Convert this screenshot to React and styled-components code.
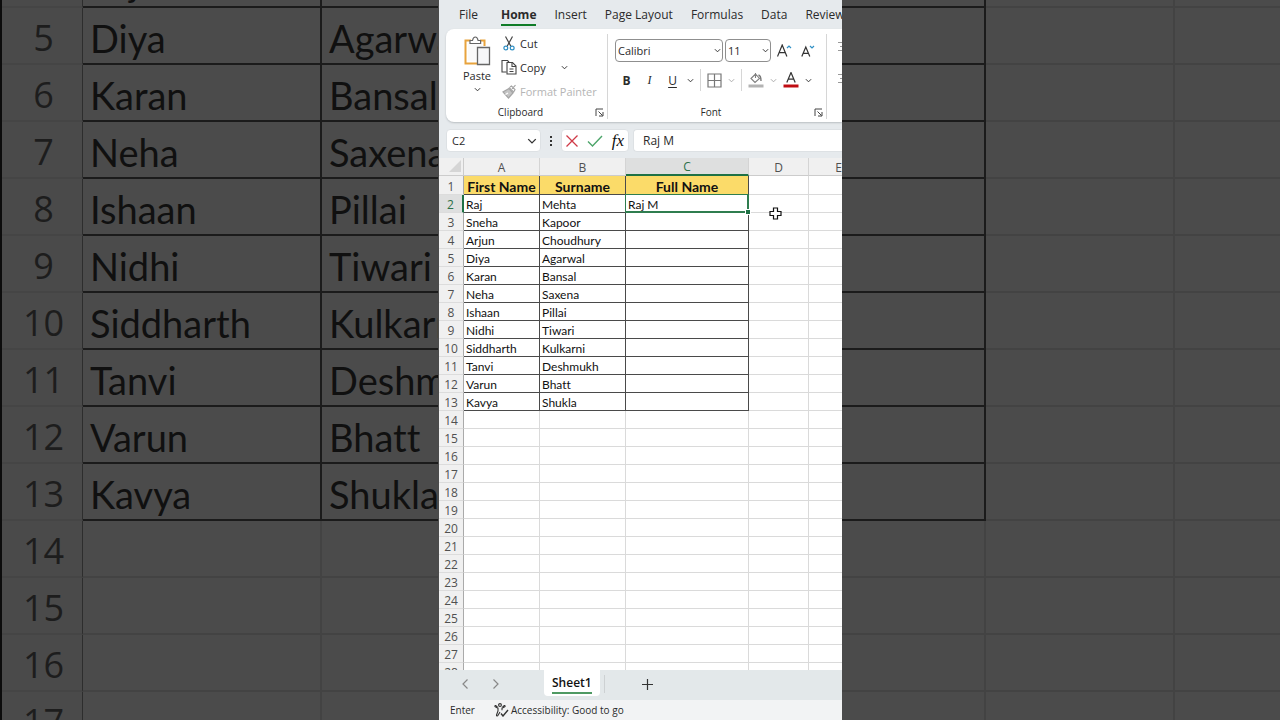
import React from 'react'
import styled, { createGlobalStyle, css } from 'styled-components'

const people = [
  ['Raj', 'Mehta', 'Raj M'],
  ['Sneha', 'Kapoor', ''],
  ['Arjun', 'Choudhury', ''],
  ['Diya', 'Agarwal', ''],
  ['Karan', 'Bansal', ''],
  ['Neha', 'Saxena', ''],
  ['Ishaan', 'Pillai', ''],
  ['Nidhi', 'Tiwari', ''],
  ['Siddharth', 'Kulkarni', ''],
  ['Tanvi', 'Deshmukh', ''],
  ['Varun', 'Bhatt', ''],
  ['Kavya', 'Shukla', ''],
]

const menu = ['File', 'Home', 'Insert', 'Page Layout', 'Formulas', 'Data', 'Review']
const columns = ['A', 'B', 'C', 'D', 'E']
const emptyRows = Array.from({ length: 15 }, (_, i) => i + 14)

const Chevron = ({ size = 7, color = '#333' }) => (
  <svg width={size} height={size} viewBox="0 0 8 8" fill="none" stroke={color} strokeWidth="1.1">
    <path d="M1 2.5 4 5.5 7 2.5" />
  </svg>
)

const PasteIcon = () => (
  <svg width="28" height="30" viewBox="0 0 28 30" fill="none">
    <path d="M8 4.5H2.5v23H14M17 4.5h4.5V10" stroke="#e8a33d" strokeWidth="2" />
    <path d="M5 6.5v18h9V11h5V6.5z" fill="#fafafa" />
    <path d="M7 7.5V4.5h2.5C10 2 11 1 12.3 1s2.3 1 2.8 3.5h2.5v3z" fill="#fff" stroke="#666" strokeWidth="1.2" />
    <path d="M14.5 11.5h12v17h-12z" fill="#f6f7f9" stroke="#666" strokeWidth="1.3" />
  </svg>
)

const CutIcon = () => (
  <svg width="12" height="15" viewBox="0 0 12 15" fill="none">
    <path d="M2.5.5 8 10.5M9.5.5 4 10.5" stroke="#444" strokeWidth="1.2" />
    <circle cx="2.8" cy="12" r="1.9" stroke="#2f8fc4" strokeWidth="1.2" />
    <circle cx="9.2" cy="12" r="1.9" stroke="#2f8fc4" strokeWidth="1.2" />
  </svg>
)

const CopyIcon = () => (
  <svg width="16" height="16" viewBox="0 0 16 16" fill="none" stroke="#444" strokeWidth="1.1">
    <path d="M5.5 13H1V1.5h5.5L8 3" />
    <path d="M6 3.5h5.5L15 7v8H6z" fill="#fff" />
    <path d="M11 3.5V7.5h4M8.5 10h4M8.5 12.5h4" />
  </svg>
)

const PainterIcon = () => (
  <svg width="15" height="15" viewBox="0 0 15 15" fill="none" stroke="#a5a5a5" strokeWidth="1.2">
    <path d="M13.5 1.2 10 4.8M7 3.5l5 5M8 3l1.5-1L13 5.5 12 7.5" />
    <path d="M7 4.5 1 8l5.5 6L11 9z" fill="#c4c4c4" />
    <path d="M3.5 10.5 6 9" stroke="#fff" />
  </svg>
)

const LauncherIcon = () => (
  <svg width="9" height="9" viewBox="0 0 9 9" fill="none" stroke="#444" strokeWidth="1">
    <path d="M1 8V1h7M3.5 3.5l4 4M8 4v4H4" />
  </svg>
)

const GrowIcon = () => (
  <svg width="15" height="14" viewBox="0 0 15 14" fill="none">
    <path d="M.5 12.5 5.2 1l4.700 11.500M2.300 8.600h5.800" stroke="#333" strokeWidth="1.2" />
    <path d="m10 4 2-2 2 2" stroke="#2f8fc4" strokeWidth="1.2" />
  </svg>
)

const ShrinkIcon = () => (
  <svg width="14" height="14" viewBox="0 0 14 14" fill="none">
    <path d="M.8 12.5 4.8 3l4 9.500M2.300 9.300h5" stroke="#333" strokeWidth="1.2" />
    <path d="m9 2 2 2 2-2" stroke="#2f8fc4" strokeWidth="1.2" />
  </svg>
)

const BordersIcon = () => (
  <svg width="15" height="15" viewBox="0 0 15 15" fill="none" stroke="#777" strokeWidth="1.2">
    <path d="M1 1h13v13H1zM7.5 1v13M1 7.5h13" />
  </svg>
)

const FillIcon = () => (
  <svg width="16" height="16" viewBox="0 0 16 16" fill="none">
    <path d="M7.5 1v5M3 6.5 7.5 2l4 4.5-4.5 4z" stroke="#808080" strokeWidth="1.1" />
    <path d="M10.5 3c2 .5 2.5 2.5 2.5 6" stroke="#777" strokeWidth="1.4" />
    <path d="M.5 12.5h15v3H.5z" fill="#b3b3b3" />
  </svg>
)

const FontColorIcon = () => (
  <svg width="16" height="16" viewBox="0 0 16 16" fill="none">
    <path d="M3.8 10.5 8 .5l4.200 10M5.200 7.200h5.600" stroke="#333" strokeWidth="1.2" />
    <path d="M.5 12.5h15v3H.5z" fill="#c00d12" />
  </svg>
)

const AlignIcon = () => (
  <svg width="12" height="14" viewBox="0 0 12 14" stroke="#999" strokeWidth="1">
    <path d="M0 2.5h12M2 6.5h8M0 10.5h12" />
  </svg>
)

const AccessIcon = () => (
  <svg width="15" height="14" viewBox="0 0 15 14" fill="none" stroke="#333" strokeWidth="1.1">
    <circle cx="6" cy="2" r="1.4" />
    <path d="M3.5 3.8 1.8 2.6C1 2.2.5 3.3 1.3 3.8L4 5.2V8l-1.5 4c-.2 1 1 1.3 1.4.5L6 9M8.500 3.8l1.700-1.200c.8-.4 1.300.7.5 1.200L8 5.200v2" />
    <path d="m7 10.5 2 2.5 5-6" strokeWidth="1.4" />
  </svg>
)

const Sheet = () => (
  <Grid>
    <colgroup>
      <Col $w={25} />
      <Col $w={76} />
      <Col $w={86} />
      <Col $w={123} />
      <Col $w={60} />
      <Col $w={60} />
    </colgroup>
    <thead>
      <tr>
        <Corner aria-label="Select all">
          <svg width="12" height="12" viewBox="0 0 12 12">
            <path d="M12 0v12H0z" fill="#d5d5d5" />
          </svg>
        </Corner>
        {columns.map((name) => (
          <ColHead key={name} scope="col" $active={name === 'C'}>
            {name}
          </ColHead>
        ))}
      </tr>
    </thead>
    <tbody>
      <TitleRow>
        <RowHead scope="row">1</RowHead>
        <TitleCell>First Name</TitleCell>
        <TitleCell>Surname</TitleCell>
        <TitleCell>Full Name</TitleCell>
        <Cell />
        <Cell />
      </TitleRow>
      {people.map((person, i) => (
        <tr key={person[0]}>
          <RowHead scope="row" $active={i === 0}>
            {i + 2}
          </RowHead>
          {person.map((value, c) =>
            i === 0 && c === 2 ? (
              <ActiveCell key={c}>{value}</ActiveCell>
            ) : (
              <Cell key={c} $filled>
                {value}
              </Cell>
            )
          )}
          <Cell />
          <Cell />
        </tr>
      ))}
      {emptyRows.map((n) => (
        <tr key={n}>
          <RowHead scope="row">{n}</RowHead>
          {columns.map((name) => (
            <Cell key={name} />
          ))}
        </tr>
      ))}
    </tbody>
  </Grid>
)

const Backdrop = () => (
  <BackdropArea aria-hidden="true">
    <BackdropGrid>
      <colgroup>
        <Col $w={81} />
        <Col $w={239} />
        <Col $w={270} />
        <Col $w={394} />
        <Col $w={189} />
        <Col $w={240} />
      </colgroup>
      <tbody>
        {people.slice(2).map((person, i) => (
          <tr key={person[0]}>
            <BigRowHead>{i + 4}</BigRowHead>
            {person.map((value, c) => (
              <BigCell key={c} $filled>
                {value}
              </BigCell>
            ))}
            <BigCell />
            <BigCell />
          </tr>
        ))}
        {emptyRows.slice(0, 4).map((n) => (
          <tr key={n}>
            <BigRowHead>{n}</BigRowHead>
            {columns.map((name) => (
              <BigCell key={name} />
            ))}
          </tr>
        ))}
      </tbody>
    </BackdropGrid>
  </BackdropArea>
)

const App = () => (
  <>
    <GlobalStyle />
    <Stage>
      <Backdrop />
      <Phone>
        <Menu>
          {menu.map((item) => (
            <MenuItem key={item} $active={item === 'Home'}>
              {item}
            </MenuItem>
          ))}
        </Menu>

        <Ribbon>
          <ClipboardGroup>
            <ClipboardTools>
              <PasteButton>
                <PasteIcon />
                Paste
                <Chevron />
              </PasteButton>
              <ToolList>
                <ToolButton>
                  <ToolIcon><CutIcon /></ToolIcon>
                  Cut
                </ToolButton>
                <CopyRow>
                  <ToolButton>
                    <ToolIcon><CopyIcon /></ToolIcon>
                    Copy
                  </ToolButton>
                  <IconButton aria-label="Copy options"><Chevron /></IconButton>
                </CopyRow>
                <ToolButton disabled>
                  <ToolIcon><PainterIcon /></ToolIcon>
                  Format Painter
                </ToolButton>
              </ToolList>
            </ClipboardTools>
            <GroupFooter>
              <GroupName>Clipboard</GroupName>
              <IconButton aria-label="Clipboard settings"><LauncherIcon /></IconButton>
            </GroupFooter>
          </ClipboardGroup>

          <FontGroup>
            <FontRow>
              <SelectBox $w={108}>
                <select aria-label="Font" defaultValue="Calibri">
                  <option>Calibri</option>
                </select>
                <Chevron />
              </SelectBox>
              <SelectBox $w={46}>
                <select aria-label="Font size" defaultValue="11">
                  <option>11</option>
                </select>
                <Chevron />
              </SelectBox>
              <SizeButtons>
                <IconButton aria-label="Increase font size"><GrowIcon /></IconButton>
                <IconButton aria-label="Decrease font size"><ShrinkIcon /></IconButton>
              </SizeButtons>
            </FontRow>
            <StyleRow>
              <StyleButton $bold>B</StyleButton>
              <StyleButton $italic>I</StyleButton>
              <StyleButton $underline>U</StyleButton>
              <IconButton aria-label="Underline options"><Chevron /></IconButton>
              <Split />
              <IconButton aria-label="Borders"><BordersIcon /></IconButton>
              <IconButton aria-label="Border options"><Chevron color="#aaa" /></IconButton>
              <Split />
              <IconButton aria-label="Fill colour"><FillIcon /></IconButton>
              <IconButton aria-label="Fill options"><Chevron color="#aaa" /></IconButton>
              <IconButton aria-label="Font colour"><FontColorIcon /></IconButton>
              <IconButton aria-label="Font colour options"><Chevron /></IconButton>
            </StyleRow>
            <GroupFooter>
              <GroupName>Font</GroupName>
              <IconButton aria-label="Font settings"><LauncherIcon /></IconButton>
            </GroupFooter>
          </FontGroup>

          <AlignGroup>
            <IconButton aria-label="Top align"><AlignIcon /></IconButton>
            <IconButton aria-label="Align left"><AlignIcon /></IconButton>
          </AlignGroup>
        </Ribbon>

        <FormulaRow>
          <NameBox>
            <input aria-label="Name box" defaultValue="C2" />
            <IconButton aria-label="Names"><Chevron size={10} /></IconButton>
          </NameBox>
          <svg width="4" height="12" viewBox="0 0 4 12" fill="#333">
            <path d="M1 1h2v2H1zM1 5h2v2H1zM1 9h2v2H1z" />
          </svg>
          <FormulaActions>
            <IconButton aria-label="Cancel">
              <svg width="12" height="12" viewBox="0 0 12 12" stroke="#cf3a47" strokeWidth="1.3">
                <path d="m.5.5 11 11M11.5.5l-11 11" />
              </svg>
            </IconButton>
            <IconButton aria-label="Confirm">
              <svg width="16" height="12" viewBox="0 0 16 12" fill="none" stroke="#4da56a" strokeWidth="1.4">
                <path d="M1 6.5 5.5 11 15 1" />
              </svg>
            </IconButton>
            <FxButton>fx</FxButton>
          </FormulaActions>
          <FormulaInput aria-label="Formula bar" defaultValue="Raj M" />
        </FormulaRow>

        <SheetArea>
          <Sheet />
          <Pointer width="13" height="13" viewBox="0 0 13 13">
            <path
              d="M4.5 1h4v3.5H12v4H8.5V12h-4V8.5H1v-4h3.5z"
              fill="#fff"
              stroke="#111"
              strokeWidth="1.2"
            />
          </Pointer>
        </SheetArea>

        <TabBar>
          <TabNav>
            <IconButton aria-label="Previous sheet">
              <svg width="6" height="10" viewBox="0 0 6 10" fill="none" stroke="#888" strokeWidth="1.2">
                <path d="M5.5.5 1 5l4.5 4.5" />
              </svg>
            </IconButton>
            <IconButton aria-label="Next sheet">
              <svg width="6" height="10" viewBox="0 0 6 10" fill="none" stroke="#888" strokeWidth="1.2">
                <path d="M.5.5 5 5 .5 9.5" />
              </svg>
            </IconButton>
          </TabNav>
          <SheetTab>
            <span>Sheet1</span>
          </SheetTab>
          <TabSplit />
          <IconButton aria-label="New sheet">
            <svg width="11" height="11" viewBox="0 0 11 11" stroke="#333" strokeWidth="1.2">
              <path d="M5.5 0v11M0 5.5h11" />
            </svg>
          </IconButton>
        </TabBar>

        <StatusBar>
          <span>Enter</span>
          <Accessibility>
            <AccessIcon />
            Accessibility: Good to go
          </Accessibility>
        </StatusBar>
      </Phone>
    </Stage>
  </>
)

const GlobalStyle = createGlobalStyle`
  * {
    box-sizing: border-box;
  }
  body {
    margin: 0;
    background: #4b4b4b;
    font-family: 'Open Sans', 'Noto Sans', sans-serif;
    color: #2b2b2b;
  }
  button, input, select {
    font: inherit;
    color: inherit;
    border: 0;
    padding: 0;
    margin: 0;
    background: none;
  }
  svg {
    display: block;
    flex: none;
  }
`

const Stage = styled.main`
  display: grid;
  height: 100vh;
  overflow: hidden;
  justify-items: center;
  grid-template-columns: minmax(0, 1fr);
  grid-template-rows: minmax(0, 1fr);
`

const BackdropArea = styled.div`
  grid-area: 1 / 1;
  width: 100%;
  overflow: hidden;
  background: #4b4b4b;
  border-left: 2px solid #0c0c0c;
`

const sheetTable = css`
  table-layout: fixed;
  width: 0;
  border-collapse: separate;
  border-spacing: 0;
  font-family: Lato, 'Open Sans', sans-serif;
  font-variant-ligatures: none;
`

/* row 4 is scrolled almost out of view */
const BackdropGrid = styled.table`
  ${sheetTable}
  margin-top: -49px;
  font-size: 38px;
  line-height: 50px;
  color: #101010;
`

const Col = styled.col`
  width: ${({ $w }) => $w}px;
`

const BigRowHead = styled.th`
  height: 57px;
  padding: 5px 0 0 3px;
  font-family: 'Open Sans', sans-serif;
  font-size: 36px;
  font-weight: 400;
  color: #1d1d1d;
  background: #4a4a4a;
  border-right: 1px solid #2d2d2d;
  border-bottom: 2px solid #454545;
`

const BigCell = styled.td`
  height: 57px;
  padding: 5px 0 0 7px;
  white-space: nowrap;
  overflow: hidden;
  border-right: 2px solid ${({ $filled }) => ($filled ? '#1b1b1b' : '#434343')};
  border-bottom: 2px solid ${({ $filled }) => ($filled ? '#1b1b1b' : '#434343')};
`

const Phone = styled.section`
  grid-area: 1 / 1;
  z-index: 1;
  display: flex;
  flex-direction: column;
  width: 404px;
  overflow: hidden;
  background: #e6eaed;
  border-left: 1px solid #4b4b4b;
`

const Menu = styled.nav`
  display: flex;
  gap: 18px;
  height: 29px;
  padding: 5px 0 2px 20px;
`

const MenuItem = styled.button`
  flex: none;
  height: 21px;
  font-size: 12px;
  line-height: 19px;
  white-space: nowrap;
  font-weight: ${({ $active }) => ($active ? 700 : 400)};
  border-bottom: 2px solid ${({ $active }) => ($active ? '#107c28' : 'transparent')};

  &:first-child {
    margin-right: 5px;
  }
`

const Ribbon = styled.div`
  display: flex;
  height: 93px;
  margin-left: 7px;
  padding: 5px 0 3px;
  background: #fff;
  border-radius: 8px 0 0 8px;
  box-shadow: 0 1px 2px #b9bec2;
`

const Group = styled.div`
  display: flex;
  flex: none;
  flex-direction: column;
  border-right: 1px solid #d6d6d6;
`

const ClipboardGroup = styled(Group)`
  width: 162px;
`

const FontGroup = styled(Group)`
  width: 219px;
`

const AlignGroup = styled.div`
  display: flex;
  flex-direction: column;
  gap: 18px;
  padding: 6px 0 0 11px;
`

const ClipboardTools = styled.div`
  display: flex;
  gap: 8px;
  padding-left: 16px;
`

const IconButton = styled.button`
  display: flex;
  align-items: center;
  justify-content: center;
  flex: none;
`

const PasteButton = styled.button`
  display: flex;
  flex-direction: column;
  align-items: center;
  width: 30px;
  padding-top: 2px;
  font-size: 11px;
  line-height: 20px;
`

const ToolList = styled.div`
  display: flex;
  flex-direction: column;
  gap: 6px;
`

const ToolButton = styled.button`
  display: flex;
  align-items: center;
  gap: 2px;
  height: 18px;
  font-size: 11px;
  white-space: nowrap;

  &:disabled {
    color: #b5b5b5;
  }
`

const ToolIcon = styled.span`
  display: flex;
  justify-content: center;
  width: 18px;
`

const CopyRow = styled.div`
  display: flex;
  gap: 15px;
`

const GroupFooter = styled.div`
  display: flex;
  align-items: center;
  height: 14px;
  margin-top: auto;
  padding-right: 3px;
`

const GroupName = styled.span`
  flex: 1;
  font-size: 10px;
  line-height: 14px;
  text-align: center;
`

const FontRow = styled.div`
  display: flex;
  align-items: center;
  gap: 2px;
  padding: 5px 0 0 7px;
`

const SelectBox = styled.div`
  display: flex;
  align-items: center;
  width: ${({ $w }) => $w}px;
  height: 23px;
  padding-right: 1px;
  border: 1px solid #8f8f8f;
  border-radius: 4px;

  select {
    flex: 1;
    min-width: 0;
    padding-left: 2px;
    font-size: 11px;
    appearance: none;
  }
`

const SizeButtons = styled.div`
  display: flex;
  gap: 9px;
  padding-left: 4px;
`

const StyleRow = styled.div`
  display: flex;
  align-items: center;
  gap: 6px;
  height: 22px;
  margin-top: 7px;
  padding-left: 10px;
`

const StyleButton = styled.button`
  width: 17px;
  font-size: 12px;
  font-weight: ${({ $bold }) => ($bold ? 700 : 400)};
  font-family: ${({ $italic }) => ($italic ? "'Liberation Serif', serif" : 'inherit')};
  font-style: ${({ $italic }) => ($italic ? 'italic' : 'normal')};
  text-decoration: ${({ $underline }) => ($underline ? 'underline' : 'none')};
  text-underline-offset: 2px;
`

const Split = styled.span`
  width: 1px;
  height: 22px;
  background: #d6d6d6;
`

const FormulaRow = styled.div`
  display: flex;
  align-items: center;
  gap: 8px;
  height: 36px;
  padding: 7px 0 6px 7px;
`

const barBox = css`
  height: 23px;
  background: #fff;
  border: 1px solid #dde1e4;
  border-radius: 4px;
`

const NameBox = styled.div`
  ${barBox}
  display: flex;
  align-items: center;
  width: 95px;
  padding: 0 3px 0 5px;

  input {
    flex: 1;
    min-width: 0;
    font-size: 11px;
  }
`

const FormulaActions = styled.div`
  ${barBox}
  display: flex;
  align-items: center;
  justify-content: space-between;
  width: 68px;
  padding: 0 4px;
`

const FxButton = styled.button`
  font-family: 'Liberation Serif', serif;
  font-size: 17px;
  font-style: italic;
  line-height: 20px;
  color: #111;
`

const FormulaInput = styled.input`
  ${barBox}
  flex: 1;
  min-width: 0;
  margin-left: -4px;
  padding-left: 9px;
  border-right: 0;
  border-radius: 4px 0 0 4px;
  font-size: 12px;
`

const SheetArea = styled.div`
  position: relative;
  flex: 1;
  min-height: 0;
  overflow: hidden;
  background: #fff;
`

const Grid = styled.table`
  ${sheetTable}
  font-size: 12px;
  line-height: 15px;
  color: #111;
`

const headCell = css`
  padding: 2px 0 0;
  font-family: 'Open Sans', sans-serif;
  font-weight: 400;
  text-align: center;
  color: ${({ $active }) => ($active ? '#2c7048' : '#505050')};
  background: ${({ $active }) => ($active ? '#dedfdf' : '#f0f0f0')};
`

const Corner = styled.th`
  height: 18px;
  padding: 0 2px 2px 0;
  background: #f0f0f0;
  border-right: 1px solid #ccc;
  border-bottom: 1px solid #ccc;

  svg {
    margin-left: auto;
  }
`

const ColHead = styled.th`
  ${headCell}
  height: 18px;
  padding: 1px 0 0;
  border-right: 1px solid #d4d4d4;
  border-bottom: ${({ $active }) => ($active ? '2px solid #1e7145' : '1px solid #ccc')};
`

const RowHead = styled.th`
  ${headCell}
  height: 18px;
  border-right: ${({ $active }) => ($active ? '2px solid #1e7145' : '1px solid #aaa')};
  border-bottom: 1px solid #dcdcdc;
`

const TitleRow = styled.tr`
  height: 19px;
`

const Cell = styled.td`
  height: 18px;
  padding: 2px 0 0 2px;
  white-space: nowrap;
  border-right: 1px solid ${({ $filled }) => ($filled ? '#4a4a4a' : '#dadada')};
  border-bottom: 1px solid ${({ $filled }) => ($filled ? '#4a4a4a' : '#dadada')};
`

const TitleCell = styled(Cell).attrs({ $filled: true })`
  padding: 2px 0 0;
  font-size: 14px;
  font-weight: 700;
  text-align: center;
  background: #fbdb69;
`

const ActiveCell = styled(Cell).attrs({ $filled: true })`
  position: relative;

  &::before {
    content: '';
    position: absolute;
    inset: -1px;
    border: 2px solid #2f7d4f;
    border-width: 1px 2px 2px 1px;
  }

  &::after {
    content: '';
    position: absolute;
    right: -2px;
    bottom: -2px;
    width: 4px;
    height: 4px;
    background: #1e7145;
    outline: 1px solid #fff;
  }
`

const Pointer = styled.svg`
  position: absolute;
  left: 330px;
  top: 49px;
`

const TabBar = styled.div`
  display: flex;
  align-items: flex-start;
  height: 30px;
  background: #e3e8ea;

  > button {
    height: 28px;
  }
`

const TabNav = styled.div`
  display: flex;
  justify-content: center;
  align-items: center;
  gap: 25px;
  width: 105px;
  height: 28px;
  padding-right: 22px;
`

const SheetTab = styled.button`
  && {
    height: 26px;
  }
  padding: 0 8px;
  background: #fff;
  border-radius: 0 0 4px 4px;
  font-size: 12px;
  font-weight: 600;
  color: #111;

  span {
    display: block;
    line-height: 19px;
    border-bottom: 2px solid #4f9a63;
  }
`

const TabSplit = styled.span`
  width: 1px;
  height: 18px;
  margin: 5px 37px 0 4px;
  background: #cdd1d3;
`

const StatusBar = styled.footer`
  display: flex;
  align-items: center;
  gap: 19px;
  height: 20px;
  padding-left: 11px;
  background: #f2f3f4;
  font-size: 10px;
`

const Accessibility = styled.span`
  display: flex;
  align-items: center;
  gap: 2px;
  white-space: nowrap;
`

export default App
